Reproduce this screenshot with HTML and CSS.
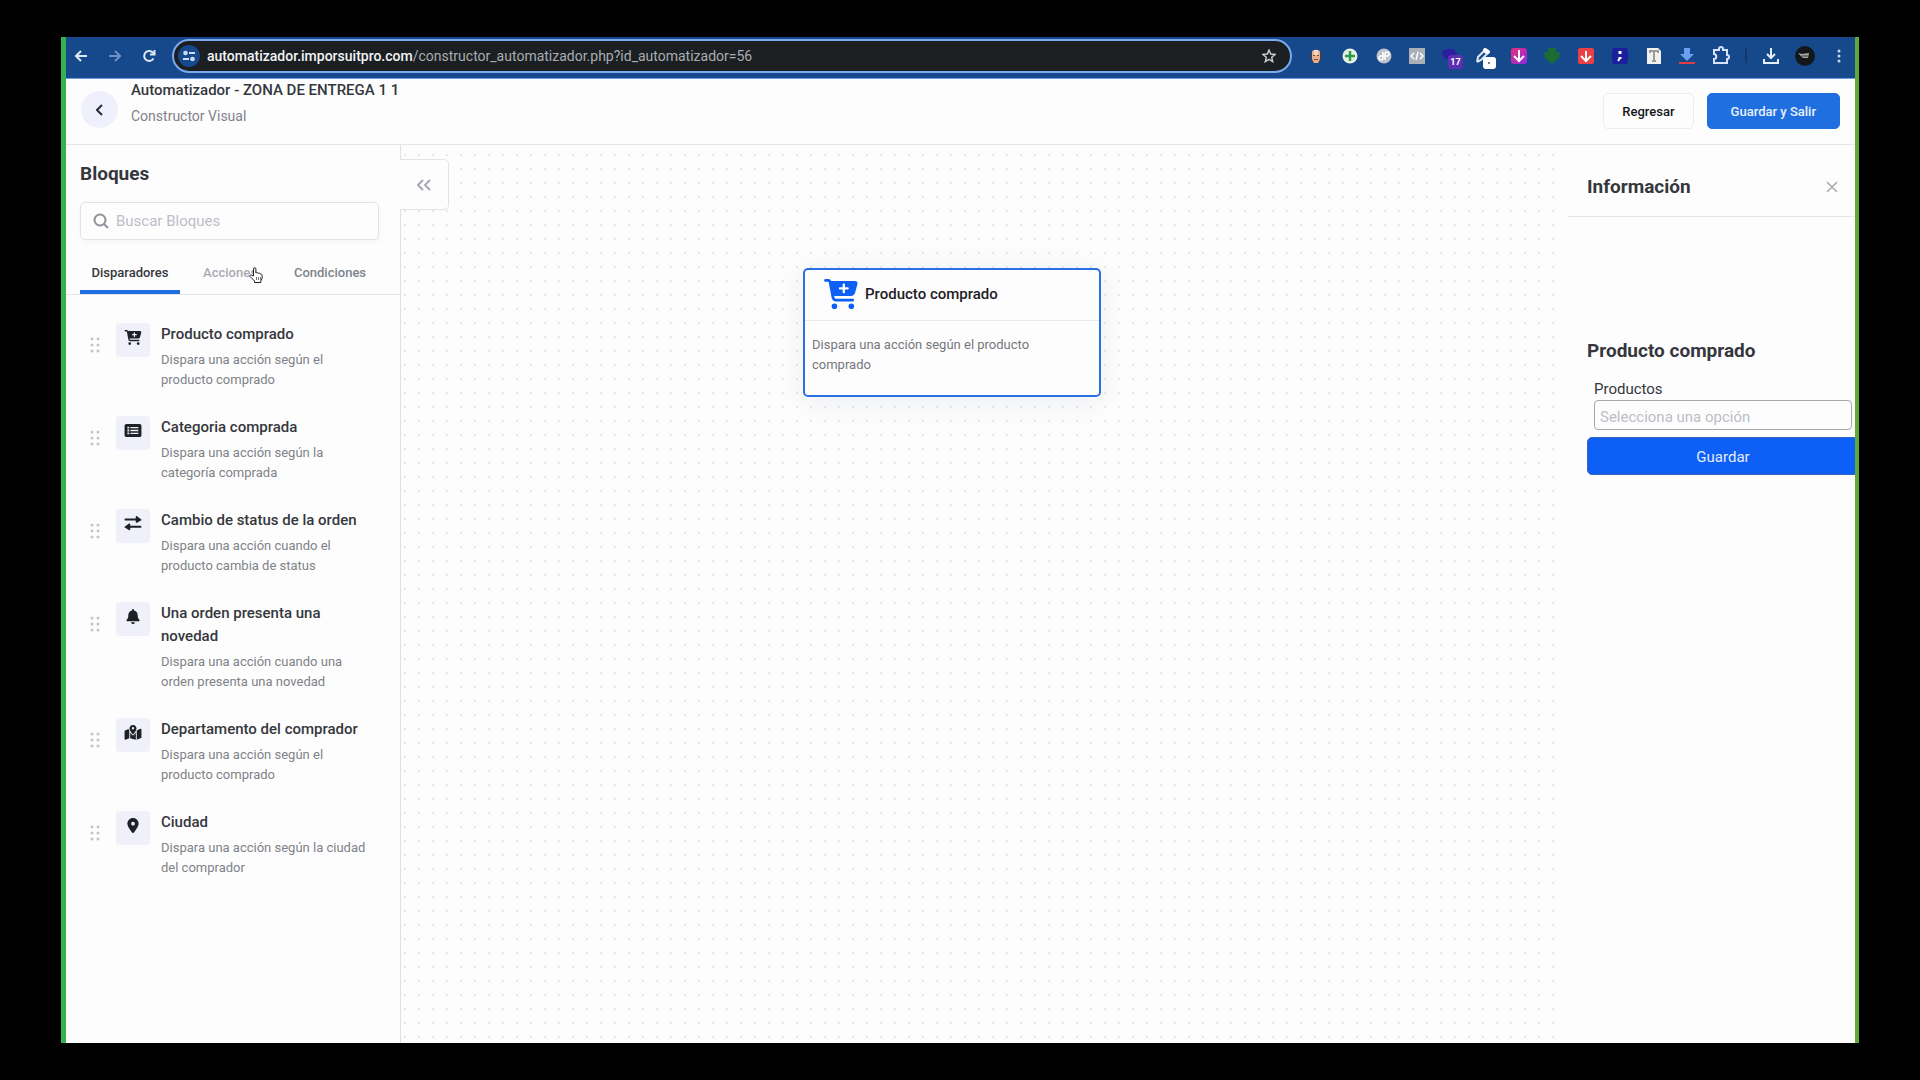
FILE: index.html
```html
<!DOCTYPE html>
<html lang="es">
<head>
  <meta charset="UTF-8" />
  <meta name="viewport" content="width=device-width, initial-scale=1.0" />
  <title>Automatizador | Constructor Visual</title>
  <link rel="stylesheet" href="styles.css">
</head>
<body>
  <!-- Iconos reutilizados -->
  <svg class="sprite" aria-hidden="true">
    <symbol id="cart" viewBox="0 0 576 512"><path d="M0 24C0 10.700 10.700 0 24 0H69.500c22 0 41.500 12.800 50.600 32h411c26.300 0 45.500 25 38.600 50.400l-41 152.300c-8.500 31.400-37 53.300-69.500 53.300H170.700l5.400 28.500c2.200 11.300 12.100 19.500 23.600 19.500H488c13.300 0 24 10.700 24 24s-10.700 24-24 24H199.700c-34.600 0-64.300-24.600-70.700-58.500L77.400 54.500c-.7-3.800-4-6.500-7.900-6.500H24C10.700 48 0 37.300 0 24zM128 464a48 48 0 1 1 96 0 48 48 0 1 1 -96 0zm336-48a48 48 0 1 1 0 96 48 48 0 1 1 0-96zM252 160c0 11 9 20 20 20h44v44c0 11 9 20 20 20s20-9 20-20V180h44c11 0 20-9 20-20s-9-20-20-20H356V96c0-11-9-20-20-20s-20 9-20 20v44H272c-11 0-20 9-20 20z"/></symbol>
    <symbol id="list" viewBox="0 0 576 512"><path d="M0 96C0 60.700 28.700 32 64 32H512c35.300 0 64 28.700 64 64V416c0 35.300-28.700 64-64 64H64c-35.300 0-64-28.700-64-64V96z"/><path fill="#eceefa" d="M96 128h64v60H96zM96 226h64v60H96zM96 324h64v60H96zM200 136h272v44H200zM200 234h272v44H200zM200 332h272v44H200z"/></symbol>
    <symbol id="swap" viewBox="0 0 512 448"><path d="M504 105 377 9c-16-12-39-4-39 15v51H32a29 29 0 0 0 0 58h306v50c0 19 23 29 39 17l127-75c10-6 10-14 0-20zM8 323l127-96c16-12 39-2 39 17v50h306a29 29 0 0 1 0 58H174v51c0 19-23 27-39 15L8 343c-10-6-10-14 0-20z"/></symbol>
    <symbol id="bell" viewBox="0 0 448 512"><path d="M224 0c-17.700 0-32 14.300-32 32V51.200C119 66 64 130.600 64 208v18.800c0 47-17.300 92.400-48.500 127.600l-7.400 8.300c-8.400 9.400-10.400 22.900-5.300 34.400S19.400 416 32 416H416c12.600 0 24-7.400 29.200-18.900s3.100-25-5.300-34.400l-7.400-8.300C401.300 319.200 384 273.900 384 226.800V208c0-77.400-55-142-128-156.800V32c0-17.700-14.300-32-32-32zm45.300 493.300c12-12 18.700-28.300 18.700-45.300H224 160c0 17 6.700 33.300 18.700 45.300s28.300 18.700 45.300 18.700s33.300-6.700 45.300-18.700z"/></symbol>
    <symbol id="map" viewBox="0 0 576 512"><path d="M408 120c0 54.600-73.100 151.900-105.200 192c-7.700 9.600-22 9.600-29.600 0C241.100 271.900 168 174.600 168 120C168 53.700 221.700 0 288 0s120 53.700 120 120zm8 80.400c3.500-6.900 6.700-13.800 9.600-20.600c.5-1.200 1-2.500 1.500-3.700l116-46.400C558.900 123.400 576 135 576 152V422.800c0 9.800-6 18.600-15.100 22.300L416 503V200.400zM137.600 138.300c2.400 14.100 7.200 28.300 12.800 41.500c2.900 6.800 6.100 13.700 9.600 20.600V451.800L32.900 502.700C17.100 509 0 497.400 0 480.400V209.600c0-9.800 6-18.600 15.100-22.300l122.600-49zM327.800 332c13.900-17.400 35.700-45.700 56.200-77V504.300L192 449.400V255c20.500 31.300 42.300 59.600 56.200 77c20.500 25.600 59.100 25.600 79.600 0zM288 152a40 40 0 1 0 0-80 40 40 0 1 0 0 80z"/></symbol>
    <symbol id="pin" viewBox="0 0 384 512"><path d="M215.700 499.200C267 435 384 279.400 384 192C384 86 298 0 192 0S0 86 0 192c0 87.400 117 243 168.300 307.200c12.300 15.300 35.100 15.300 47.400 0zM192 128a64 64 0 1 1 0 128 64 64 0 1 1 0-128z"/></symbol>
    <symbol id="grip" viewBox="0 0 10 16"><circle cx="2" cy="2" r="1.500"/><circle cx="8" cy="2" r="1.500"/><circle cx="2" cy="8" r="1.500"/><circle cx="8" cy="8" r="1.500"/><circle cx="2" cy="14" r="1.500"/><circle cx="8" cy="14" r="1.500"/></symbol>
  </svg>

  <div class="ventana">
    <div class="navegador">
      <div class="nav-botones">
        <button class="nav-btn" aria-label="Atrás"><svg width="12" height="12" viewBox="0 0 12 12" fill="none" stroke="#dfe8f5" stroke-width="2"><path d="M12 6H1.500M6 1 1 6l5 5"/></svg></button>
        <button class="nav-btn" aria-label="Adelante"><svg width="12" height="12" viewBox="0 0 12 12" fill="none" stroke="#6b93c8" stroke-width="2"><path d="M0 6h10.500M6 1l5 5-5 5"/></svg></button>
        <button class="nav-btn" aria-label="Recargar"><svg width="14" height="14" viewBox="0 0 14 14" fill="none" stroke="#dfe8f5" stroke-width="2"><path d="M11.500 9.500A5 5 0 1 1 10.800 3.500L12 5"/><path d="M12.500 1v4.500H8"/></svg></button>
      </div>

      <div class="direccion">
        <span class="sitio"><svg width="12" height="12" viewBox="0 0 12 12" fill="none" stroke="#cfe0f8" stroke-width="2"><circle cx="2.500" cy="3" r="1.300"/><path d="M6 3h6M0 9h6"/><circle cx="9.500" cy="9" r="1.300"/></svg></span>
        <p class="url"><strong>automatizador.imporsuitpro.com</strong>/constructor_automatizador.php?id_automatizador=56</p>
        <button class="nav-btn" aria-label="Favorito"><svg width="14" height="14" viewBox="0 0 14 14" fill="none" stroke="#c9c9c9" stroke-width="1.500"><path d="M7 1l1.700 4.100 4.300.4-3.300 2.800 1 4.300L7 10.300l-3.700 2.300 1-4.300L1 5.500l4.300-.4z"/></svg></button>
      </div>

      <div class="extensiones">
        <svg viewBox="0 0 24 24"><path fill="#5a4038" d="M7 9h10v6l-2 4H9l-2-4z"/><path fill="#e9b08f" d="M8 8c0-3 8-3 8 0v7l-2 4h-4l-2-4z"/><path fill="#f3d9c6" d="M10 6h4v5h-4z"/><path fill="#7a4a38" d="M9 11h2v1H9zM13 11h2v1h-2zM10 15h4v1h-4z"/></svg>
        <svg viewBox="0 0 24 24"><circle cx="12" cy="12" r="7.500" fill="#e6f1e4"/><path stroke="#2d9a48" stroke-width="2.500" d="M12 7v10M7 12h10"/></svg>
        <svg viewBox="0 0 24 24"><circle cx="12" cy="12" r="7.500" fill="#bcc3cb"/><path fill="none" stroke="#fff" stroke-width="1.500" d="M11 8v6a2 2 0 1 1-2-2h2M13 16v-6a2 2 0 1 1 2 2h-2"/></svg>
        <svg viewBox="0 0 24 24"><path fill="#a9b0b8" d="M4 4h16v16H4z"/><path fill="none" stroke="#fff" stroke-width="1.500" d="M9 9l-3 3 3 3M15 9l3 3-3 3M13 8l-2 8"/></svg>
        <span class="ext"><svg viewBox="0 0 24 24"><path fill="#2a1f9c" d="M3 8l4-3h8l3 5-4 5H6l-3-4z"/></svg><b class="ext-num">17</b></span>
        <svg viewBox="0 0 24 24"><path fill="none" stroke="#dce7f6" stroke-width="2" d="M4 18l1-5 6-6 3 3-6 6-4 2"/><path stroke="#fff" stroke-width="4" stroke-linecap="round" d="M12 6l3 2"/><rect x="10" y="13" width="13" height="12" rx="3" fill="#fff"/><circle cx="16" cy="19" r="1" fill="#555"/></svg>
        <svg viewBox="0 0 24 24"><defs><linearGradient id="rosa" x2="1" y2="1"><stop stop-color="#ec2d78"/><stop offset="1" stop-color="#8a2be8"/></linearGradient></defs><rect x="4" y="4" width="16" height="16" rx="3" fill="url(#rosa)"/><path fill="none" stroke="#fff" stroke-width="2" d="M12 6v11M7 12l5 5 5-5"/></svg>
        <svg viewBox="0 0 24 24"><path fill="#1d6b35" d="M8 4h8v4h4l-1 6-7 6-7-6-1-6h4z"/></svg>
        <svg viewBox="0 0 24 24"><rect x="4" y="4" width="16" height="16" rx="2" fill="#ea3f45"/><path fill="none" stroke="#fff" stroke-width="2" d="M12 7v10M7 12l5 5 5-5"/></svg>
        <svg viewBox="0 0 24 24"><rect x="4" y="4" width="16" height="16" rx="3" fill="#1c1f9c"/><path stroke="#fff" stroke-width="3" d="M12 7v3M12 13v2"/><path stroke="#fff" stroke-width="2" d="M12 14l-2 3"/></svg>
        <svg viewBox="0 0 24 24"><path fill="#f1f1ef" d="M5 4h11l3 3v13H5z"/><path fill="none" stroke="#9a9a9a" stroke-width="2" d="M8 9V7h8v2M12 7v10M10 17h4"/></svg>
        <svg viewBox="0 0 24 24"><path fill="#6ba0ee" d="M9 4h6v6h4l-7 7-7-7h4z"/><path fill="#e23c48" d="M4 18h16v2H4z"/></svg>
        <svg viewBox="0 0 24 24"><path fill="none" stroke="#d5e4fa" stroke-width="2" d="M5 6h5V5a2 2 0 0 1 4 0v1h4v5a2 2 0 0 1 0 4v4H5v-4c3 0 3-5 0-5z"/></svg>
      </div>

      <span class="separador"></span>
      <div class="nav-botones">
        <button class="nav-btn" aria-label="Descargas"><svg width="16" height="16" viewBox="0 0 16 16" fill="none" stroke="#e6eefa" stroke-width="2"><path d="M8 0v10M4 6l4 4 4-4M1 11v4h14v-4"/></svg></button>
        <button class="nav-btn" aria-label="Perfil"><svg width="20" height="20" viewBox="0 0 20 20"><circle cx="10" cy="10" r="10" fill="#14171a"/><path fill="#a8a8a8" d="M3 7l4 1 7-1-1 5H8z"/><path stroke="#333" d="M7 10h6"/></svg></button>
        <button class="nav-btn" aria-label="Menú"><svg width="4" height="14" viewBox="0 0 4 14" fill="#c7d8f0"><circle cx="2" cy="2" r="1.500"/><circle cx="2" cy="7" r="1.500"/><circle cx="2" cy="12" r="1.500"/></svg></button>
      </div>
    </div>

    <header class="cabecera">
      <button class="volver" aria-label="Volver"><svg width="8" height="12" viewBox="0 0 8 12" fill="none" stroke="#2b2d35" stroke-width="2"><path d="M6 1 1 6l5 5"/></svg></button>
      <div class="titulos">
        <h1>Automatizador - ZONA DE ENTREGA 1 1</h1>
        <p>Constructor Visual</p>
      </div>
      <button class="btn">Regresar</button>
      <button class="btn btn-azul">Guardar y Salir</button>
    </header>

    <main class="constructor">
      <aside class="bloques">
        <h2>Bloques</h2>
        <label class="buscar">
          <svg width="16" height="16" viewBox="0 0 16 16" fill="none" stroke="#8f929b" stroke-width="2"><circle cx="7" cy="7" r="5.500"/><path d="M11 11l4 4"/></svg>
          <input type="text" placeholder="Buscar Bloques" aria-label="Buscar Bloques">
        </label>
        <nav class="pestanas">
          <button class="activa">Disparadores</button>
          <button class="hover">Acciones<svg class="cursor" width="15" height="17" viewBox="0 0 15 17"><path fill="#fff" stroke="#222" d="M4.500 9V2a1.200 1.200 0 0 1 2.400 0v4c1-.8 2-.5 2.200.4.900-.6 1.900-.2 2 .7 1-.4 2 .1 2 1.200v3.200l-1.300 2.500v1.500H5.500v-1.500L1 9.500C.6 8 2 7.500 2.800 8.200z"/><path stroke="#777" d="M7.500 10v3M9.500 10v3M11.500 10v3"/></svg></button>
          <button>Condiciones</button>
        </nav>
        <ul class="lista">
          <li>
            <svg class="grip"><use href="#grip"/></svg>
            <span class="icono"><svg><use href="#cart"/></svg></span>
            <div><h3>Producto comprado</h3><p>Dispara una acción según el producto comprado</p></div>
          </li>
          <li>
            <svg class="grip"><use href="#grip"/></svg>
            <span class="icono"><svg><use href="#list"/></svg></span>
            <div><h3>Categoria comprada</h3><p>Dispara una acción según la categoría comprada</p></div>
          </li>
          <li>
            <svg class="grip"><use href="#grip"/></svg>
            <span class="icono"><svg><use href="#swap"/></svg></span>
            <div><h3>Cambio de status de la orden</h3><p>Dispara una acción cuando el producto cambia de status</p></div>
          </li>
          <li>
            <svg class="grip"><use href="#grip"/></svg>
            <span class="icono"><svg><use href="#bell"/></svg></span>
            <div><h3>Una orden presenta una novedad</h3><p>Dispara una acción cuando una orden presenta una novedad</p></div>
          </li>
          <li>
            <svg class="grip"><use href="#grip"/></svg>
            <span class="icono"><svg><use href="#map"/></svg></span>
            <div><h3>Departamento del comprador</h3><p>Dispara una acción según el producto comprado</p></div>
          </li>
          <li>
            <svg class="grip"><use href="#grip"/></svg>
            <span class="icono"><svg><use href="#pin"/></svg></span>
            <div><h3>Ciudad</h3><p>Dispara una acción según la ciudad del comprador</p></div>
          </li>
        </ul>
      </aside>

      <section class="lienzo">
        <button class="plegar" aria-label="Plegar"><svg width="14" height="12" viewBox="0 0 14 12" fill="none" stroke="#a5a8b3" stroke-width="2"><path d="M6 1 1 6l5 5M13 1 8 6l5 5"/></svg></button>
        <article class="nodo">
          <div class="nodo-cabecera"><svg width="34" height="30"><use href="#cart"/></svg><h3>Producto comprado</h3></div>
          <p>Dispara una acción según el producto comprado</p>
        </article>
      </section>

      <aside class="propiedades">
        <div class="prop-cabecera">
          <h2>Información</h2>
          <button aria-label="Cerrar"><svg width="12" height="12" viewBox="0 0 12 12" stroke="#a9a9ad" stroke-width="1.500"><path d="M1 1l10 10M11 1 1 11"/></svg></button>
        </div>
        <form class="prop-form">
          <h2>Producto comprado</h2>
          <div class="campo">
            <label for="productos">Productos</label>
            <input type="text" id="productos" placeholder="Selecciona una opción">
          </div>
          <button type="button" class="guardar">Guardar</button>
        </form>
      </aside>
    </main>
  </div>
</body>
</html>
```
FILE: styles.css
```css
* {
  margin: 0;
  padding: 0;
  box-sizing: border-box;
}

body {
  display: flex;
  min-height: 100vh;
  padding: 37px 61px;
  background: #000;
  color: #35373d;
  font-family: Roboto, "Liberation Sans", sans-serif;
  font-size: 14px;
}

button {
  border: none;
  background: none;
  font: inherit;
  color: inherit;
  cursor: pointer;
}

input {
  font: inherit;
}

svg {
  display: block;
}

.sprite {
  position: absolute;
  width: 0;
  height: 0;
}

.ventana {
  flex: 1;
  min-width: 0;
  display: flex;
  flex-direction: column;
  overflow: hidden;
  background: #fdfdfd;
  border-left: 5px solid #35b04e;
  border-right: 4px solid #5dab35;
}

/* Barra del navegador */
.navegador {
  display: flex;
  align-items: center;
  height: 42px;
  padding: 0 4px 4px 3px;
  background: #16488c;
  border-bottom: 1px solid #6f9ce0;
}

.nav-botones {
  display: flex;
  gap: 10px;
}

.nav-btn {
  display: flex;
  align-items: center;
  justify-content: center;
  width: 24px;
  height: 24px;
}

.direccion {
  flex: 1;
  display: flex;
  align-items: center;
  height: 34px;
  margin: 0 12px 0 11px;
  padding: 0 9px 0 4px;
  background: #1b1f22;
  border: 2px solid #7ca8ec;
  border-radius: 17px;
}

.sitio {
  display: flex;
  align-items: center;
  justify-content: center;
  width: 22px;
  height: 22px;
  border-radius: 50%;
  background: #16488c;
}

.url {
  flex: 1;
  margin-left: 7px;
  color: #a9adb3;
}

.url strong {
  font-weight: 500;
  color: #f1f3f5;
}

.extensiones {
  display: flex;
  justify-content: space-between;
  width: 429px;
}

.extensiones svg {
  width: 24px;
  height: 24px;
  overflow: visible;
}

.ext {
  position: relative;
}

.ext-num {
  position: absolute;
  left: 9px;
  top: 11px;
  width: 15px;
  border-radius: 3px;
  background: #5b2fb0;
  color: #fff;
  font-size: 9px;
  line-height: 14px;
  text-align: center;
}

.separador {
  width: 2px;
  height: 15px;
  margin: 0 12px;
  background: #12376c;
}

/* Cabecera */
.cabecera {
  display: flex;
  align-items: flex-start;
  gap: 13px;
  height: 66px;
  padding: 0 15px;
  border-bottom: 1px solid #e6e6e8;
}

.volver {
  display: flex;
  align-items: center;
  justify-content: center;
  width: 37px;
  height: 37px;
  margin-top: 12px;
  border-radius: 50%;
  background: #eff0fb;
}

.titulos {
  flex: 1;
}

.titulos h1 {
  font-size: 15px;
  font-weight: 500;
  line-height: 22px;
}

.titulos p {
  margin-top: 4px;
  line-height: 22px;
  color: #808289;
}

.btn {
  height: 36px;
  margin-top: 14px;
  padding: 0 18px;
  border: 1px solid #ededf0;
  border-radius: 5px;
  font-size: 13px;
  font-weight: 500;
  color: #15161a;
}

.btn-azul {
  padding: 0 23px;
  border-color: #1f6fe0;
  background: #1f6fe0;
  color: #e8f1fd;
}

/* Constructor */
.constructor {
  flex: 1;
  display: flex;
}

.bloques {
  width: 335px;
  border-right: 1px solid #dfe0e4;
}

h2 {
  font-size: 19px;
  font-weight: 700;
  line-height: 24px;
}

.bloques h2 {
  margin: 17px 14px 16px;
}

.buscar {
  display: flex;
  align-items: center;
  gap: 7px;
  height: 38px;
  margin: 0 21px 0 14px;
  padding: 0 12px;
  border: 1px solid #e2e3e7;
  border-radius: 5px;
  box-shadow: 0 2px 6px rgba(30, 30, 60, 0.04);
}

.buscar input {
  flex: 1;
  min-width: 0;
  border: none;
  outline: none;
  background: none;
  font-size: 15px;
}

::placeholder {
  color: #bcbec6;
  opacity: 1;
}

.pestanas {
  display: flex;
  height: 55px;
  padding: 10px 20px 0 14px;
  border-bottom: 1px solid #e6e6ea;
}

.pestanas button {
  position: relative;
  flex: 1;
  font-size: 13px;
  font-weight: 500;
  color: #80838b;
}

.pestanas .activa {
  color: #35373d;
  box-shadow: inset 0 -4px #1f6fe0;
}

.pestanas .hover {
  color: #a9abb3;
}

.cursor {
  position: absolute;
  right: 16px;
  top: 17px;
}

.lista {
  display: flex;
  flex-direction: column;
  gap: 26px;
  padding: 28px 32px 28px 24px;
  list-style: none;
}

.lista li {
  display: flex;
  align-items: flex-start;
}

.grip {
  flex: none;
  width: 10px;
  height: 16px;
  margin: 14px 16px 0 0;
  fill: #c3c5cb;
}

.icono {
  flex: none;
  width: 34px;
  height: 34px;
  margin-right: 11px;
  padding-top: 7px;
  border-radius: 4px;
  background: #eff0fa;
}

.icono svg {
  width: 34px;
  height: 15px;
  fill: #1e2025;
}

h3 {
  font-size: 15px;
  font-weight: 500;
  line-height: 23px;
}

.lista p {
  margin-top: 4px;
  font-size: 13px;
  line-height: 20px;
  color: #808289;
}

.lienzo {
  position: relative;
  flex: 1;
  padding-right: 8px;
  background: radial-gradient(circle, #e6e7ea 1px, transparent 1px) -3px 3px / 14px 14px;
  background-clip: content-box;
}

.plegar {
  display: flex;
  align-items: center;
  justify-content: center;
  position: absolute;
  left: -1px;
  top: 14px;
  width: 49px;
  height: 51px;
  border: 1px solid #e2e3e7;
  border-left: none;
  border-radius: 0 5px 5px 0;
  background: #fdfdfd;
}

/* Bloque colocado en el lienzo */
.nodo {
  position: absolute;
  left: 402px;
  top: 123px;
  width: 298px;
  border: 2px solid #2a70e2;
  border-radius: 5px;
  background: #fdfdfd;
  box-shadow: 0 4px 30px rgba(22, 33, 74, 0.08);
}

.nodo-cabecera {
  display: flex;
  align-items: center;
  gap: 7px;
  height: 51px;
  padding: 0 19px 2px;
  border-bottom: 1px solid #e8e8ec;
}

.nodo-cabecera svg {
  fill: #0d5ff5;
}

.nodo-cabecera h3 {
  color: #1e2025;
}

.nodo p {
  padding: 14px 32px 20px 7px;
  font-size: 13px;
  line-height: 20px;
  color: #75777e;
}

/* Panel derecho */
.propiedades {
  width: 287px;
  background: #fdfdfd;
}

.prop-cabecera {
  display: flex;
  align-items: center;
  justify-content: space-between;
  height: 72px;
  padding: 12px 17px 0 19px;
  border-bottom: 1px solid #e6e6e8;
}

.prop-form {
  margin-right: -4px;
  padding: 122px 0 0 19px;
}

.campo {
  padding: 15px 7px 7px;
}

.campo label {
  display: block;
  font-size: 15px;
  line-height: 22px;
}

.campo input {
  display: block;
  width: 100%;
  height: 30px;
  padding: 4px 5px 0;
  border: 1px solid #a6a7aa;
  border-radius: 4px;
  background: #fdfdfd;
  font-size: 15px;
}

.guardar {
  width: 100%;
  height: 38px;
  padding-top: 1px;
  border: 1px solid #3a66b8;
  border-radius: 5px;
  background: #0d5ff5;
  color: #e4edfd;
  font-size: 15px;
}
```
